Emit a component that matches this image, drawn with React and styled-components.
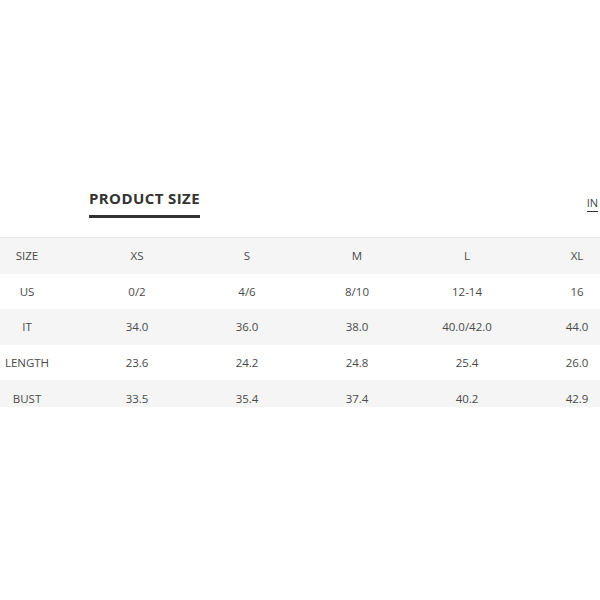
import React from "react";
import styled, { createGlobalStyle } from "styled-components";

const Global = createGlobalStyle`
  html, body { margin: 0; padding: 0; background: #fff; }
  body { width: 600px; height: 600px; overflow: hidden; font-family: "Open Sans", sans-serif; }
`;

const Page = styled.div`
  width: 600px;
  height: 600px;
  overflow: hidden;
  padding-top: 186px;
  box-sizing: border-box;
`;

const TabBar = styled.div`
  display: flex;
  justify-content: space-between;
  align-items: flex-start;
  height: 51px;
  padding-left: 89px;
`;

const Tab = styled.div`
  font-size: 15px;
  font-weight: 700;
  letter-spacing: 0.4px;
  color: #333;
  line-height: 24px;
  padding-bottom: 5px;
  border-bottom: 3px solid #333;
`;

const Unit = styled.div`
  margin-top: 10px;
  margin-right: 2px;
  font-size: 11px;
  color: #444;
  line-height: 14px;
  padding-bottom: 1px;
  border-bottom: 1px solid #333;
`;

const TableWrap = styled.div`
  height: 169px;
  overflow: hidden;
  border-top: 1px solid #e6e6e6;
  margin-left: -28px;
  width: 660px;
`;

const Row = styled.div`
  display: grid;
  grid-template-columns: repeat(6, 110px);
  height: 35.6px;
  align-items: center;
  background: ${(p) => (p.$shaded ? "#f5f5f5" : "#fff")};
`;

const Cell = styled.div`
  text-align: center;
  font-size: 11.5px;
  color: #4a4a4a;
`;

const rows = [
  ["SIZE", "XS", "S", "M", "L", "XL"],
  ["US", "0/2", "4/6", "8/10", "12-14", "16"],
  ["IT", "34.0", "36.0", "38.0", "40.0/42.0", "44.0"],
  ["LENGTH", "23.6", "24.2", "24.8", "25.4", "26.0"],
  ["BUST", "33.5", "35.4", "37.4", "40.2", "42.9"],
];

export default function App() {
  return (
    <>
      <Global />
      <Page>
        <TabBar>
          <Tab>PRODUCT SIZE</Tab>
          <Unit>IN</Unit>
        </TabBar>
        <TableWrap>
          {rows.map((r, i) => (
            <Row key={i} $shaded={i % 2 === 0}>
              {r.map((c, j) => (
                <Cell key={j}>{c}</Cell>
              ))}
            </Row>
          ))}
        </TableWrap>
      </Page>
    </>
  );
}
